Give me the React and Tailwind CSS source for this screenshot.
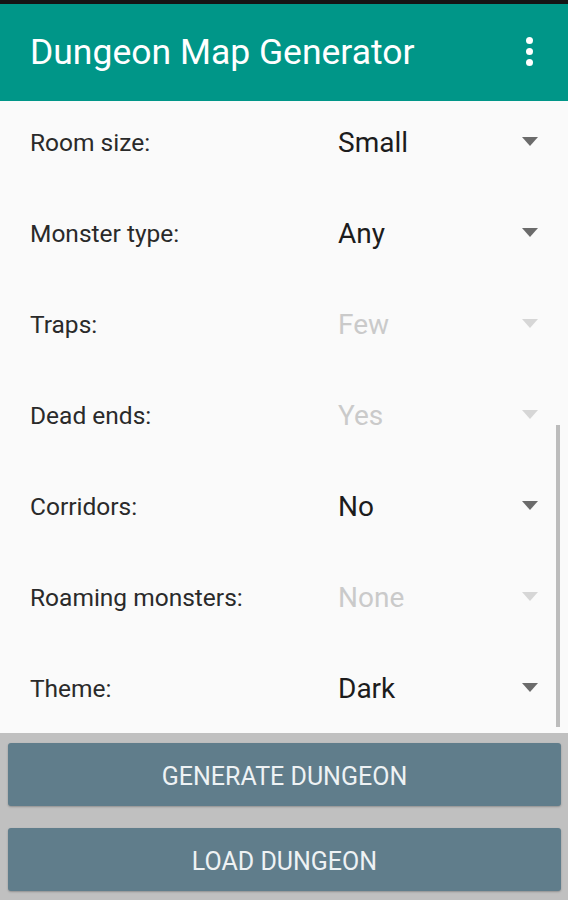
import React from 'react';

const rows = [
  { label: 'Room size:', value: 'Small' },
  { label: 'Monster type:', value: 'Any' },
  { label: 'Traps:', value: 'Few', disabled: true },
  { label: 'Dead ends:', value: 'Yes', disabled: true },
  { label: 'Corridors:', value: 'No' },
  { label: 'Roaming monsters:', value: 'None', disabled: true },
  { label: 'Theme:', value: 'Dark' },
];

const Arrow = ({ disabled }) => (
  <svg width="16" height="9" viewBox="0 0 16 9" className="mr-[30px] mb-[4px]">
    <path d="M0 0 L16 0 L8 9 Z" fill={disabled ? '#d6d6d6' : '#6b6b6b'} />
  </svg>
);

const App = () => {
  return (
    <div className="w-[568px] h-[900px] flex flex-col bg-[#c0c0c0] overflow-hidden" style={{ fontFamily: 'Roboto, "Noto Sans", sans-serif' }}>
      <div className="h-[4px] bg-[#151515]" />
      <div className="h-[97px] bg-[#009688] flex items-center justify-between pl-[30px] pr-[35px]">
        <h1 className="text-white text-[35.5px] leading-none">Dungeon Map Generator</h1>
        <div className="flex flex-col gap-[4px] pb-[2px]">
          <span className="w-[7px] h-[7px] rounded-full bg-white" />
          <span className="w-[7px] h-[7px] rounded-full bg-white" />
          <span className="w-[7px] h-[7px] rounded-full bg-white" />
        </div>
      </div>
      <div className="relative h-[632px] bg-[#fafafa]">
        {rows.map((row, i) => (
          <div key={i} className="h-[91px] flex items-center pb-[7px]">
            <span className="w-[338px] pl-[30px] text-[24.5px] text-[#2a2a2a]">{row.label}</span>
            <span className={`flex-1 text-[28px] ${row.disabled ? 'text-[#cacaca]' : 'text-[#1c1c1c]'}`}>{row.value}</span>
            <Arrow disabled={row.disabled} />
          </div>
        ))}
        <div className="absolute right-[8px] top-[324px] w-[4px] h-[302px] bg-[#bcbcbc]" />
      </div>
      <div className="flex-1 flex flex-col gap-[22px] pt-[10px] pl-[8px] pr-[7px]">
        <button className="h-[63px] pt-[5px] rounded-[3px] bg-[#607d8b] text-[#eef2f4] text-[25px] shadow-[0_1px_2px_rgba(0,0,0,0.25)]">GENERATE DUNGEON</button>
        <button className="h-[63px] pt-[5px] rounded-[3px] bg-[#607d8b] text-[#eef2f4] text-[25px] shadow-[0_1px_2px_rgba(0,0,0,0.25)]">LOAD DUNGEON</button>
      </div>
    </div>
  );
};

export default App;
